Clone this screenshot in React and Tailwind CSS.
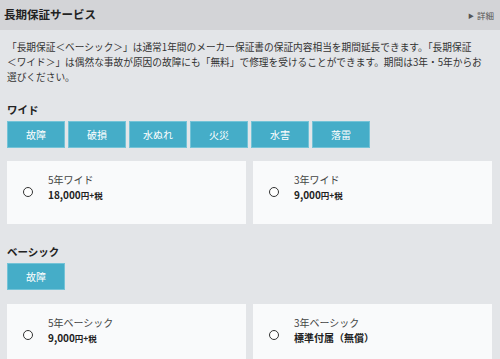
import React from "react";

const font = { fontFamily: '"Noto Sans CJK JP", "Noto Sans", sans-serif' };

function Radio() {
  return (
    <span className="mt-[15px] block h-[10px] w-[10px] shrink-0 rounded-full border border-[#333] bg-white" />
  );
}

function Card({ label, price, unit }) {
  return (
    <div className="flex h-[63px] items-start bg-[#f9fafb] pl-[16px] pt-[11px]">
      <Radio />
      <div className="ml-[15px] flex flex-col">
        <span className="text-[10px] leading-[15px] text-[#444]">{label}</span>
        <span className="text-[10px] font-bold leading-[15px] text-[#222]">
          {price}
          {unit && <span className="text-[8.5px]">{unit}</span>}
        </span>
      </div>
    </div>
  );
}

function Tag({ children }) {
  return (
    <div className="flex h-[27px] w-[58px] items-center justify-center border border-[#74c3d7] bg-[#45adc8] text-[10px] text-white">
      {children}
    </div>
  );
}

export default function App() {
  return (
    <div className="h-[359px] w-[500px] overflow-hidden bg-[#e3e5e8] text-[#333]" style={font}>
      <div className="flex h-[30px] items-center justify-between bg-[#d3d4d7] pl-[4px] pr-[6px]">
        <h1 className="text-[11.5px] font-bold text-[#222]">長期保証サービス</h1>
        <span className="flex items-center gap-[3px] text-[8.5px] text-[#555]">
          <span className="text-[6px]">▶</span>詳細
        </span>
      </div>
      <p className="mt-[10px] whitespace-nowrap pl-[7px] text-[9.7px] leading-[15px] text-[#333]">
        「長期保証＜ベーシック＞」は通常1年間のメーカー保証書の保証内容相当を期間延長できます。「長期保証
        <br />
        ＜ワイド＞」は偶然な事故が原因の故障にも「無料」で修理を受けることができます。期間は3年・5年からお
        <br />
        選びください。
      </p>

      <h2 className="mt-[18px] pl-[7px] text-[10.5px] font-bold leading-[14px] text-[#222]">ワイド</h2>
      <div className="mt-[4px] flex gap-[3px] pl-[7px]">
        <Tag>故障</Tag>
        <Tag>破損</Tag>
        <Tag>水ぬれ</Tag>
        <Tag>火災</Tag>
        <Tag>水害</Tag>
        <Tag>落雷</Tag>
      </div>
      <div className="mt-[13px] grid grid-cols-2 gap-[7px] pl-[7px] pr-[8px]">
        <Card label="5年ワイド" price="18,000" unit="円+税" />
        <Card label="3年ワイド" price="9,000" unit="円+税" />
      </div>

      <h2 className="mt-[21px] pl-[7px] text-[10.5px] font-bold leading-[14px] text-[#222]">ベーシック</h2>
      <div className="mt-[4px] flex gap-[3px] pl-[7px]">
        <Tag>故障</Tag>
      </div>
      <div className="mt-[14px] grid grid-cols-2 gap-[7px] pl-[7px] pr-[8px]">
        <Card label="5年ベーシック" price="9,000" unit="円+税" />
        <Card label="3年ベーシック" price="標準付属（無償）" />
      </div>
    </div>
  );
}
